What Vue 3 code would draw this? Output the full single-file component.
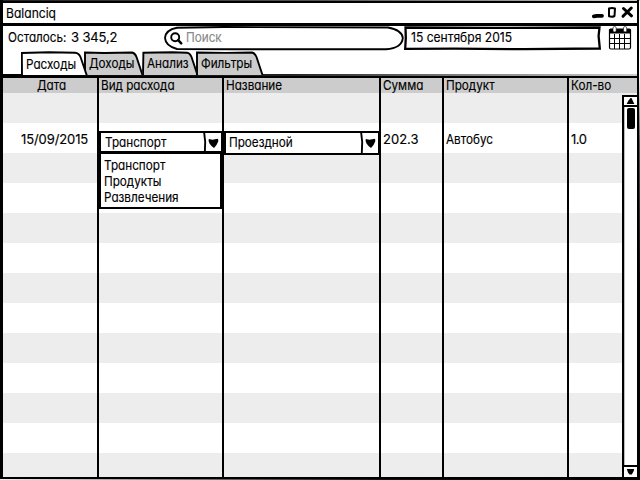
<script setup>
import { ref } from 'vue'

const tabs = [
  { title: 'Расходы', width: 67, shape: 'M1 24L0.800 2L28 1.200L54 1.700Q58 2 59.500 6L66 25' },
  { title: 'Доходы', width: 58, shape: 'M1 24V1.500L20 2L48 1.500Q51 2 52.500 6L58.500 24' },
  { title: 'Анализ', width: 54, shape: 'M1 24L1.400 1.800L30 1.300L45 1.700Q48 2 49.500 6L55.500 24' },
  { title: 'Фильтры', width: 69, shape: 'M1 24V1.500L30 1.900L56 1.500Q59 2 60.500 6L66.500 24' },
]
const active = ref(0)
const columns = ['Дата', 'Вид расхода', 'Название', 'Сумма', 'Продукт', 'Кол-во']
const kinds = ['Транспорт', 'Продукты', 'Развлечения']
const entries = { 2: ['15/09/2015', 'Транспорт', 'Проездной', '202.3', 'Автобус', '1.0'] }
</script>

<template>
  <div class="window">
    <header class="titlebar">
      <span class="name text">Balanciq</span>
      <svg class="controls" width="46" height="16" viewBox="0 0 46 16">
        <path d="M4.800 11.300L8 10.800L13 10.800" stroke-width="3.800" />
        <path d="M20 3.500Q23 2.500 26 3.500L25.500 11Q23 12.300 20 11.300Z" stroke-width="2" />
        <path d="M34.500 3.500L42.500 10.800M42.300 3L34 11.300" stroke-width="3" />
      </svg>
    </header>

    <div class="toolbar">
      <div class="balance"><span class="text left">Осталось:</span><span class="sum">3 345,2</span></div>
      <div class="search">
        <svg class="shape" width="241" height="25" viewBox="0 0 241 25">
          <path d="M13 1.800L60 1L224 1.500Q238 4 238.800 12Q238 22 222 23.300L70 23.200L13 23Q1.500 20 1 12Q1.500 4 13 1.800Z" fill="#fff" stroke="#000" stroke-width="1.900" />
        </svg>
        <svg class="glass" width="13" height="13" viewBox="0 0 13 13">
          <circle cx="5.200" cy="5.200" r="4" fill="none" stroke="#000" stroke-width="1.900" />
          <path d="M8.200 8.200L11.200 11.300" stroke="#000" stroke-width="2.500" stroke-linecap="round" />
        </svg>
        <span class="text">Поиск</span>
      </div>
      <div class="date">
        <svg class="shape" width="197" height="25" viewBox="0 0 197 25">
          <path d="M1.500 1.500L90 1.900L195.500 1.500L194.600 10L195.800 22.500L120 23.200L50 22.600L1.200 22.800L1.800 12Z" fill="#fff" stroke="#000" stroke-width="2.300" />
        </svg>
        <span class="text">15 сентября 2015</span>
      </div>
      <svg class="calendar" width="24" height="25" viewBox="0 0 24 25">
        <path d="M1.500 4H22.500V21.500Q22.500 23 21 23H3Q1.500 23 1.500 21.500Z" fill="#fff" stroke="#000" stroke-width="1.200" />
        <path d="M1 4Q1 2.500 2.500 2.500H21.500Q23 2.500 23 4V7.500H1Z" />
        <path d="M6.500 8V23M11.500 8V23M16.500 8V23M1.500 12.500H22.500M1.500 17.500H22.500" stroke="#000" stroke-width="1" />
        <rect x="5" y="0.500" width="3.200" height="5.400" rx="1.500" fill="#fff" stroke="#000" stroke-width="0.600" />
        <rect x="15.500" y="0.500" width="3.200" height="5.400" rx="1.500" fill="#fff" stroke="#000" stroke-width="0.600" />
      </svg>
    </div>

    <nav class="tabs">
      <button v-for="(tab, i) in tabs" :key="tab.title" :class="['tab', 't' + i, { active: active === i }]" @click="active = i">
        <svg class="shape" :width="tab.width" height="24" :viewBox="`0 0 ${tab.width} 24`">
          <path :d="tab.shape" stroke="#000" stroke-width="1.900" />
        </svg>
        <span class="text">{{ tab.title }}</span>
      </button>
    </nav>

    <main class="table">
      <div class="row head">
        <div v-for="(c, i) in columns" :key="c" :class="['cell', 'h' + i]"><span class="text">{{ c }}</span></div>
      </div>
      <div v-for="n in 13" :key="n" class="row">
        <div v-for="(c, i) in columns" :key="c" :class="['cell', 'c' + i]">
          <template v-if="entries[n]">
            <div v-if="i === 1 || i === 2" class="combo">
              <div class="value"><span class="text">{{ entries[n][i] }}</span></div>
              <svg class="arrow" width="18" height="20" viewBox="0 0 18 20">
                <path d="M1.200 0L2.200 9L1.800 20" fill="none" stroke="#000" stroke-width="1.900" />
                <path d="M5.800 6L9.500 6.800L14.500 5.800Q15.800 6.500 15.200 8.500L13.500 12L11 15L8.500 13L6.500 10.500Q5 8 5.800 6Z" />
              </svg>
              <ul v-if="i === 1" class="options">
                <li v-for="k in kinds" :key="k"><span class="text">{{ k }}</span></li>
              </ul>
            </div>
            <span v-else :class="{ text: i === 4, qty: i === 5 }">{{ entries[n][i] }}</span>
          </template>
        </div>
      </div>
      <div class="scrollbar">
        <div class="end"><svg width="9" height="8" viewBox="0 0 9 8"><path d="M4.500 1L5.500 1L8.300 7H.6L2.500 3.500Z" /></svg></div>
        <div class="track"><div class="thumb"></div></div>
        <div class="end bottom"><svg width="9" height="8" viewBox="0 0 9 8"><path d="M.8 1H8.200L7.500 3.500L5.800 6.500H3.500L2 4.500Z" /></svg></div>
      </div>
    </main>
  </div>
</template>

<style>
body { margin: 0; overflow: hidden; background: #fff; }
#app {
  height: 480px;
  background:
    linear-gradient(90deg, #222, #555 50%, #ccc) top / 100% 1px no-repeat,
    linear-gradient(#fff, #fff 15%, #555 30%, #000 60%) right / 1px 100% no-repeat,
    linear-gradient(90deg, #eee, #888 25%, #111 60%, #000) bottom / 100% 1px no-repeat;
}
</style>

<style scoped>
* { box-sizing: border-box; }
.window {
  width: 639px; height: 479px; padding-top: 1px;
  border: solid #000; border-width: 0 2px 0 3px;
  display: flex; flex-direction: column; background: #fff; background-clip: content-box; color: #000;
  font: 13px/16px Inter, "Noto Sans", sans-serif; font-feature-settings: "cv11"; white-space: nowrap;
  -webkit-text-stroke: 0.150px;
}
.text { display: inline-block; transform: scaleX(.9); transform-origin: left; }
.titlebar { height: 25px; flex: none; border: solid #000; border-width: 2px 0 3px; display: flex; justify-content: space-between; padding: 2px 2px 0 3px; }
.name { transform: scaleX(.93); }
.controls { fill: none; stroke: #000; stroke-linecap: round; stroke-linejoin: round; }
.toolbar { height: 25px; flex: none; display: flex; padding-left: 5px; }
.balance { width: 156px; padding-top: 3px; display: flex; }
.left { width: 63px; }
.sum { letter-spacing: -0.150px; }
.shape { position: absolute; left: 0; top: 0; z-index: -1; }
.search { width: 240px; height: 25px; position: relative; z-index: 0; display: flex; padding: 3px 0 0 6px; color: #888; }
.glass { margin: 3px 3px 0 0; }
.date { position: relative; z-index: 0; width: 197px; height: 25px; padding: 3px 0 0 7px; }
.date .text { transform: scaleX(.93); }
.calendar { margin-left: 7px; }
.tabs {
  height: 27px; flex: none; display: flex; padding-left: 18px; border-bottom: 2px solid #000;
  background: linear-gradient(90deg, #000, #222 45%, #777 70%, #ccc) bottom / 100% 2px no-repeat padding-box;
}
.tab { position: relative; z-index: 0; border: 0; padding: 4px 0 0 5px; height: 24px; background: none; font: inherit; font-feature-settings: inherit; color: inherit; text-align: left; display: flex; }
.tab path { fill: #ccc; }
.t1 { z-index: 1; }
.tab.active { z-index: 2; padding-top: 5px; }
.tab.active path { fill: #fff; }
.t0 { width: 63px; }
.t1 { width: 58px; }
.t2 { width: 54px; }
.t3 { width: 69px; }
.table { position: relative; flex: 1; overflow: hidden; border-bottom: 2px solid #000; }
.row { display: grid; grid-template-columns: 96px 125px 157px 63px 125px 1fr; height: 30px; background: #fff; }
.row:nth-child(even) { background: #ededed; }
.row.head { height: 15px; background: #ccc; }
.cell { border-right: 2px solid #000; padding-left: 2px; padding-top: 8px; min-width: 0; }
.cell:last-of-type { border-right: 0; }
.head .cell { padding-top: 0; margin-top: -1px; }
.head .h0 { padding: 0 0 0 34px; }
.c0 { padding-left: 18px; letter-spacing: -0.100px; }
.qty { letter-spacing: -0.500px; }
.combo { position: relative; z-index: 3; display: flex; height: 22px; margin-left: -2px; width: 124px; border: 2px solid #000; background: #fff; padding-left: 4px; }
.c2 .combo { width: 156px; height: 24px; padding-left: 3px; }
.value { flex: 1; padding-top: 1px; }
.options { position: absolute; left: -2px; top: 18px; width: 123px; height: 58px; margin: 0; padding: 3px 0 0 3px; list-style: none; border: 2px solid #000; border-top-width: 3px; background: #fff; }
.scrollbar { position: absolute; right: 0; top: 17px; bottom: 0; width: 15px; border-left: 2px solid #000; background: #fff; display: flex; flex-direction: column; }
.end { height: 12px; border: solid #000; border-width: 2px 0; display: flex; align-items: center; justify-content: center; }
.track { flex: 1; padding: 1px 2px; border-left: 1px solid #bbb; }
.thumb { width: 8px; height: 21px; border-radius: 2px; background: #000; }
.end.bottom { border-bottom: 0; }
</style>
